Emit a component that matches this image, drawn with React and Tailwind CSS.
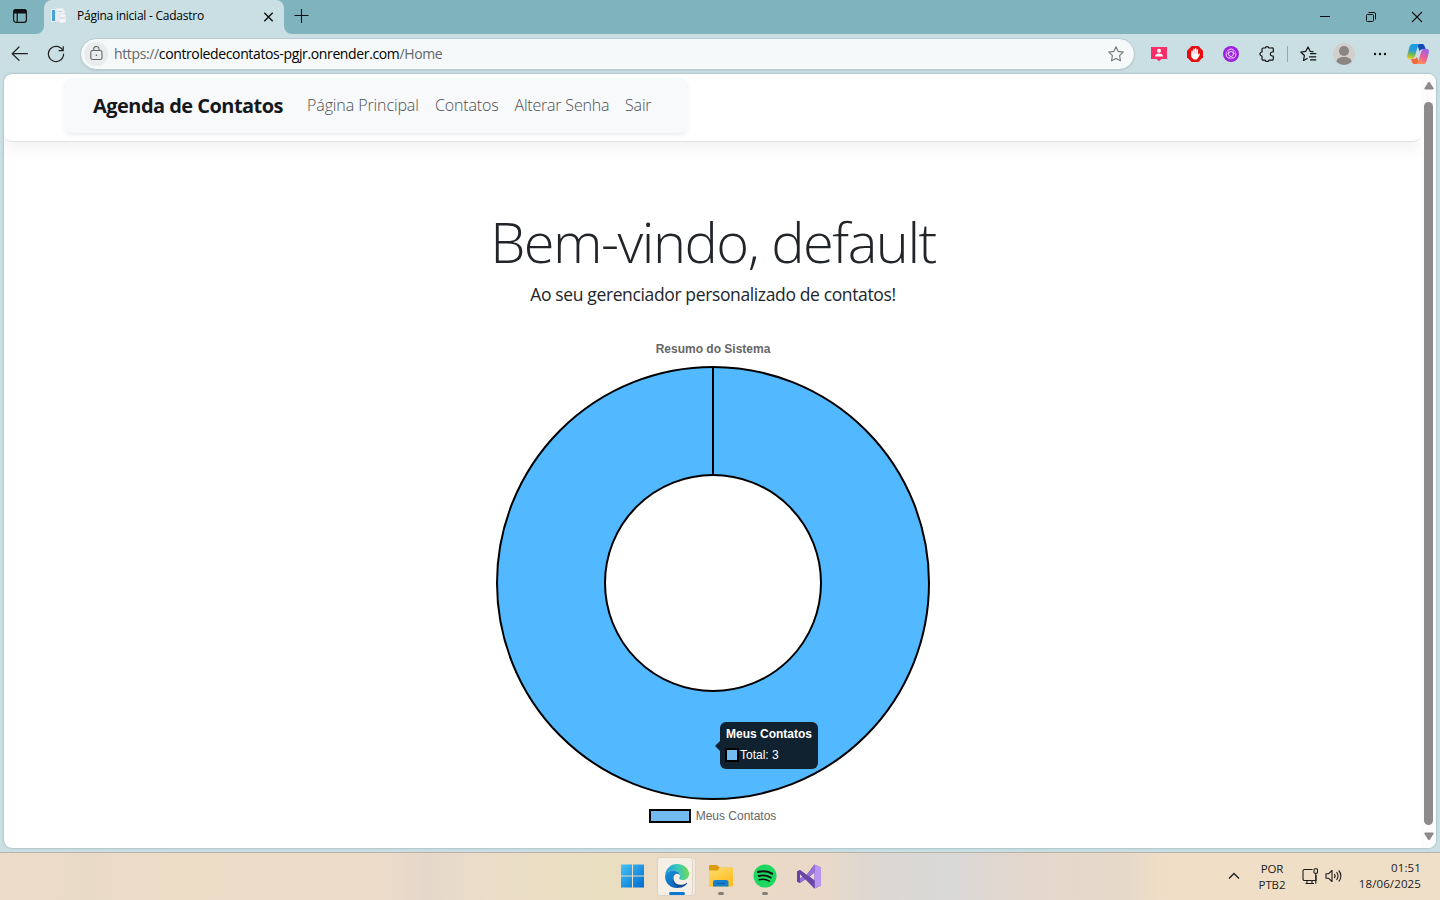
const ui = "font-['Open_Sans','Noto_Sans',sans-serif]";

function TabStrip() {
  return (
    <div className="flex h-[34px] bg-[#7fb4be] pl-[12px]">
      <svg className="mt-[8px] h-4 w-4 shrink-0" viewBox="0 0 16 16" fill="none" stroke="#111" strokeWidth="1.2">
        <rect x="1.6" y="1.6" width="12.8" height="12.8" rx="2.6" />
        <path d="M1.6 5V4a2.4 2.4 0 0 1 2.4-2.4h8A2.4 2.4 0 0 1 14.4 4v1z" fill="#111" />
        <path d="M5.2 5v9.4" />
      </svg>
      <div className="flex w-[272px] shrink-0 pl-[8px]">
        <svg className="h-[34px] w-2 shrink-0" viewBox="0 0 8 34"><path d="M8 26v8H0a8 8 0 0 0 8-8z" fill="#c9dfe3" /></svg>
        <div className="flex h-[34px] w-[240px] shrink-0 items-center rounded-t-[8px] bg-[#c9dfe3] pr-[8px] pl-[7px]">
          <svg className="mb-[2px] h-4 w-4 shrink-0" viewBox="0 0 16 16">
            <path d="M0 1h5v13H0z" fill="#e8f0f6" /><path d="M1 2h3v11H1z" fill="#4aa0d8" />
            <path d="M5 0h7l2 3v11H5z" fill="#eef3f6" stroke="#d6dde3" strokeWidth=".6" />
            <path d="M8 6h7v9H8z" fill="#f5f5f8" stroke="#cfd6dd" strokeWidth=".6" />
            <path d="M9 10h5M6.500 3.500h5" stroke="#b9c2cc" strokeWidth=".8" />
          </svg>
          <span className="mb-[2px] ml-[10px] w-[184px] shrink-0 whitespace-nowrap text-[12px] tracking-[-0.24px] text-black">Página inicial - Cadastro</span>
          <svg className="mb-[1px] h-4 w-4 shrink-0" viewBox="0 0 16 16"><path d="M3.300 3.800l8.400 8.400M11.700 3.800l-8.400 8.400" stroke="#111" strokeWidth="1.400" /></svg>
        </div>
        <svg className="h-[34px] w-2 shrink-0" viewBox="0 0 8 34"><path d="M0 26v8h8a8 8 0 0 1-8-8z" fill="#c9dfe3" /></svg>
      </div>
      <svg className="mt-[8px] ml-[-6px] h-4 w-4 shrink-0" viewBox="0 0 16 16"><path d="M7.500 1v14M.5 7.500h14" stroke="#111" strokeWidth="1.100" /></svg>
      <div className="flex-1" />
      <div className="flex w-[138px] shrink-0 items-center">
        <svg className="h-[34px] w-[46px]" viewBox="0 0 46 34"><path d="M18 16.500h10" stroke="#111" /></svg>
        <svg className="h-[34px] w-[46px]" viewBox="0 0 46 34" fill="none" stroke="#111"><rect x="18.500" y="14.500" width="7" height="7" rx="1" /><path d="M20.500 12.500h5.500a1.500 1.500 0 0 1 1.500 1.500v5.500" /></svg>
        <svg className="h-[34px] w-[46px]" viewBox="0 0 46 34"><path d="M18 12l10 10M28 12l-10 10" stroke="#111" strokeWidth="1.100" /></svg>
      </div>
    </div>
  );
}

function Star({ className }) {
  return (
    <svg className={className} viewBox="0 0 16 16" fill="none" stroke="#777" strokeWidth="1.100" strokeLinejoin="round">
      <path d="M8 .8l2.200 4.600 5 .7-3.600 3.500.9 5.200L8 12.400l-4.500 2.400.9-5.200L.8 6.100l5-.7z" />
    </svg>
  );
}

function Toolbar() {
  return (
    <div className="flex h-[40px] items-center bg-[#c9dfe3] pl-[11px]">
      <svg className="h-4 w-[17px] shrink-0" viewBox="0 0 17 16" fill="none" stroke="#222" strokeWidth="1.200" strokeLinecap="round"><path d="M16.400 7.700H1.200M8 1L1.200 7.700 8 14.300" /></svg>
      <svg className="ml-[19px] h-[18px] w-[18px] shrink-0" viewBox="0 0 18 18" fill="none" stroke="#222" strokeWidth="1.200" strokeLinecap="round"><path d="M15.800 5.500A7.600 7.600 0 1 0 16.600 9M16.200 1.500v4.200H12" /></svg>
      <div className="ml-[15px] flex h-[32px] w-[1055px] shrink-0 items-center rounded-full border border-[#b9cbd0] bg-[#f5f9fa] pr-[10px] pl-[3px] shadow-[0_1px_1px_rgba(80,110,120,0.15)]">
        <div className="flex h-6 w-6 items-center justify-center rounded-full bg-[#e8ecec]">
          <svg className="mb-[2px] h-[15px] w-[13px]" viewBox="0 0 13 15" fill="none" stroke="#666" strokeWidth="1.100"><rect x=".8" y="4.500" width="11.200" height="9" rx="1.800" /><path d="M3.700 4.500V3.200a2.700 2.700 0 0 1 5.400 0v1.300" /><circle cx="6.400" cy="9.200" r=".8" fill="#555" stroke="none" /></svg>
        </div>
        <span className="mb-[1px] ml-[6px] flex-1 whitespace-nowrap text-[14px] tracking-[-0.37px] text-[#666]">https://<span className="text-black">controledecontatos-pgjr.onrender.com</span>/Home</span>
        <Star className="h-4 w-4" />
      </div>
      <div className="ml-[16px] flex h-8 w-[289px] shrink-0 items-center">
        <svg className="h-4 w-4 shrink-0" viewBox="0 0 16 16"><path d="M0 1h16v12h-5.500L8 15.300 5.500 13H0z" fill="#fb2d66" /><circle cx="8" cy="4.700" r="2" fill="#fff" /><path d="M4 10.500c0-2 1.600-3 4-3s4 1 4 3z" fill="#fff" /></svg>
        <svg className="ml-[20px] h-4 w-4 shrink-0" viewBox="0 0 16 16"><path d="M4.700 0h6.600L16 4.700v6.600L11.300 16H4.700L0 11.300V4.700z" fill="#e60c10" /><path d="M5.100 5.200v4.600M6.900 3.400v5M8.600 2.700v5.500M10.300 3.800v5" stroke="#fff" strokeWidth="1.500" strokeLinecap="round" /><path d="M4.400 7.500h6.700v1.200l1.200-1.500.8.700-2.200 4.300-1.400 1.400H6.800L4.400 11.200z" fill="#fff" /></svg>
        <svg className="ml-[20px] h-4 w-4 shrink-0" viewBox="0 0 16 16"><circle cx="8" cy="8" r="8" fill="#9b20dc" /><g fill="none" stroke="#e9c8fb" strokeWidth=".7"><rect x="5.600" y="2.900" width="4.800" height="7.500" rx="2.400" /><rect x="5.600" y="2.900" width="4.800" height="7.500" rx="2.400" transform="rotate(120 8 8)" /><rect x="5.600" y="2.900" width="4.800" height="7.500" rx="2.400" transform="rotate(240 8 8)" /><circle cx="8" cy="8" r="4.900" /></g></svg>
        <svg className="ml-[20px] h-4 w-4 shrink-0" viewBox="0 0 16 16" fill="none" stroke="#111" strokeWidth="1.200" strokeLinejoin="round"><path d="M3 3.200A1.200 1.200 0 0 1 4.200 2h2a2 2 0 0 1 3.800 0h2.600A1.200 1.200 0 0 1 14.300 3.200V6h-1a2 2 0 0 0 0 4h1v3a1.200 1.200 0 0 1-1.200 1.200H10a2 2 0 0 1-3.800 0h-2A1.200 1.200 0 0 1 3 13v-3a2 2 0 0 1 0-4z" /></svg>
        <div className="ml-[12px] h-4 w-px bg-[#92a9ae]" />
        <svg className="ml-[12px] h-4 w-[17px] shrink-0" viewBox="0 0 17 16" fill="none" stroke="#111" strokeWidth="1.200" strokeLinejoin="round" strokeLinecap="round"><path d="M13 5.700L10.200 5.300 8 1 5.800 5.300.8 6l3.600 3.500-.9 5L7.200 12.500M10.500 7.700h5.300M9.500 10.800h6.300M10.500 13.900h5.300" /></svg>
        <svg className="ml-[16px] h-[22px] w-[22px] shrink-0" viewBox="0 0 22 22"><circle cx="11" cy="11" r="11" fill="#d2cfcc" /><circle cx="11" cy="8" r="5" fill="#8b8681" /><path d="M3.500 19c0-3.500 3-5 7.500-5s7.500 1.500 7.500 5a11 11 0 0 1-15 0z" fill="#8b8681" /></svg>
        <svg className="ml-[17px] h-4 w-4 shrink-0" viewBox="0 0 16 16" fill="#111"><circle cx="3" cy="8" r="1.200" /><circle cx="8" cy="8" r="1.200" /><circle cx="13" cy="8" r="1.200" /></svg>
        <Copilot />
      </div>
    </div>
  );
}

function Copilot() {
  return (
    <svg className="ml-[18px] h-[22px] w-[24px] shrink-0" viewBox="0 0 24 22">
      <defs>
        <linearGradient id="cpA" x1=".5" y1="0" x2=".3" y2="1"><stop offset="0" stopColor="#159bea" /><stop offset=".45" stopColor="#2f9ed0" /><stop offset=".7" stopColor="#76b955" /><stop offset="1" stopColor="#f5ca1c" /></linearGradient>
        <linearGradient id="cpB" x1=".7" y1="0" x2=".3" y2="1"><stop offset="0" stopColor="#9a65ee" /><stop offset=".5" stopColor="#e75d9d" /><stop offset="1" stopColor="#ff9350" /></linearGradient>
      </defs>
      <path d="M11 1h5c2 0 2.300 1.300 2.900 3l.8 2.300h-3.200c-1.600 0-2.300.8-2.800 2.300z" fill="#1848b8" />
      <path d="M6.500 1H14c-1.500.5-2 1.500-2.500 3.200L9.300 12c-.8 2.600-1.800 4-4.300 4H3.300C.8 16 .7 13.800 1.400 11.300L3.300 4.600C4 2.200 4.800 1 6.500 1z" fill="url(#cpA)" />
      <path d="M17.500 21H10c1.500-.5 2-1.500 2.500-3.200L14.700 10c.8-2.600 1.800-4 4.300-4h1.700c2.500 0 2.600 2.200 1.900 4.700l-1.900 6.700C20 19.800 19.200 21 17.500 21z" fill="url(#cpB)" />
      <path d="M5 16h3c1.500 0 2.200-.7 2.700-2l2 4c-.5 2-1.200 3-3.200 3H8.300c-1.400 0-2-1-2.500-2.500z" fill="#f36a36" />
    </svg>
  );
}

function Chart() {
  return (
    <div className="relative mt-[26px] flex w-[434px] flex-col items-center font-['Liberation_Sans',Arial,sans-serif]">
      <div className="h-[31px] text-[12px] leading-[28px] font-bold text-[#666]">Resumo do Sistema</div>
      <svg className="h-[434px] w-[434px]" viewBox="0 0 434 434">
        <path fillRule="evenodd" d="M217 1a216 216 0 1 1 0 432a216 216 0 1 1 0-432zM217 109a108 108 0 1 0 0 216a108 108 0 1 0 0-216z" fill="#52b8ff" stroke="#000" strokeWidth="2" />
        <path d="M217 1v108" stroke="#000" strokeWidth="2" />
      </svg>
      <div className="mt-[9px] flex h-[14px] items-center gap-[5px] pr-px">
        <div className="h-[14px] w-[42px] border-2 border-black bg-[#73bcf0]" />
        <span className="text-[12px] leading-[14px] text-[#666]">Meus Contatos</span>
      </div>
      <div className="absolute top-[387px] left-[219px] flex items-center">
        <svg className="h-[10px] w-[5px]" viewBox="0 0 5 10"><path d="M5 0v10L0 5z" fill="#10222f" /></svg>
        <div className="h-[47px] w-[98px] rounded-[6px] bg-[#10222f] px-[6px] pt-[5px] text-[12px] text-white">
          <div className="leading-[14px] font-bold whitespace-nowrap">Meus Contatos</div>
          <div className="mt-[7px] ml-[-1px] flex items-center gap-px">
            <div className="h-[14px] w-[14px] border-2 border-black bg-[#73bcf0]" />
            <span className="leading-[14px]">Total: 3</span>
          </div>
        </div>
      </div>
    </div>
  );
}

function Page() {
  return (
    <div className="mx-[4px] flex h-[774px] overflow-hidden rounded-[8px] bg-white shadow-[0_0_2px_rgba(50,90,100,0.5)]">
      <div className="flex w-[1417px] flex-col">
        <header className="h-[68px] rounded-[8px] border-b border-[#dee2e6] pt-[4px] pl-[61px] shadow-[0_8px_16px_rgba(0,0,0,0.05)]">
          <nav className="flex h-[55px] w-[622px] items-center rounded-[6px] bg-[#f8f9fa] pl-[28px] shadow-[0_2px_4px_rgba(0,0,0,0.075)]">
            <span className="w-[214px] text-[20px] font-bold tracking-[-0.54px] whitespace-nowrap text-[#16191c]">Agenda de Contatos</span>
            <div className="mb-px flex text-[16px] font-light tracking-[-0.15px] whitespace-nowrap text-[#4c5054]">
              <span className="w-[128px] tracking-[-0.1px]">Página Principal</span>
              <span className="w-[79.500px]">Contatos</span>
              <span className="w-[110.500px] tracking-[-0.2px]">Alterar Senha</span>
              <span>Sair</span>
            </div>
          </nav>
        </header>
        <main className="flex flex-col items-center pt-[66px] pl-px">
          <h1 className="h-[67px] text-[56px] leading-[67px] font-light tracking-[-1.500px] whitespace-nowrap text-[#212529]">Bem-vindo, default</h1>
          <p className="mt-[6px] h-[28px] text-[17.500px] leading-[27px] tracking-[-0.37px] whitespace-nowrap text-[#212529]">Ao seu gerenciador personalizado de contatos!</p>
          <Chart />
        </main>
      </div>
      <div className="flex w-[15px] flex-col items-center bg-[#fcfcfc] pt-[8px]">
        <svg className="h-[8px] w-[10px] shrink-0" viewBox="0 0 10 8"><path d="M4 .6a1.200 1.200 0 0 1 2 0L9.800 6.500 9 7.500H1L.2 6.500z" fill="#8b8b8b" /></svg>
        <div className="mt-[12px] h-[723px] w-[9px] rounded-full bg-[#8b8b8b]" />
        <svg className="mt-[7px] h-[8px] w-[10px] shrink-0" viewBox="0 0 10 8"><path d="M4 7.400a1.200 1.200 0 0 0 2 0L9.800 1.500 9 .5H1L.2 1.500z" fill="#8b8b8b" /></svg>
      </div>
    </div>
  );
}

function Taskbar() {
  return (
    <div className="flex h-[48px] border-t border-[#b9b3aa] bg-[linear-gradient(90deg,#eddcc7_0%,#e9dac8_6%,#eddcc6_12%,#eddcc8_26%,#e5d8cb_29.500%,#ebddc7_34%,#eadfc1_42%,#eadac6_47%,#ead9c8_57%,#dcd8d3_61%,#d9d9d8_66%,#e4d8cd_71%,#e6d9ca_78%,#f0dfc6_81%,#f0dfc8_100%)]">
      <div className="flex w-[835px] justify-end pt-[4px]">
        <div className="flex h-[43px]">
          <svg className="mt-[7px] mr-[13px] h-6 w-[25px]" viewBox="0 0 25 24">
            <defs><linearGradient id="win" x1="0" y1="0" x2="1" y2="1"><stop stopColor="#45c4f5" /><stop offset="1" stopColor="#0069d1" /></linearGradient></defs>
            <path d="M1 .5h11v11H1zM13 .5h11v11H13zM1 12.500h11v11H1zM13 12.500h11v11H13z" fill="url(#win)" />
          </svg>
          <div className="mr-[12px] ml-[-1px] flex h-[39px] w-[39px] rounded-[4px] border border-[#ded3c4] bg-[#f2ebe1]">
            <div className="flex h-[37px] w-[35px] flex-col items-center rounded-[4px] border-r border-[#ddd2c4] bg-[#f5efe6] pt-[6px] pl-[3px]">
              <svg className="h-6 w-6 shrink-0" viewBox="0 0 24 24">
                <defs>
                  <linearGradient id="eA" x1="0" y1=".5" x2="1" y2=".4"><stop stopColor="#199fdb" /><stop offset=".55" stopColor="#37c7bd" /><stop offset="1" stopColor="#73dc4f" /></linearGradient>
                  <linearGradient id="eB" x1="0" y1="0" x2=".7" y2="1"><stop stopColor="#1795dc" /><stop offset="1" stopColor="#0c61b9" /></linearGradient>
                </defs>
                <path d="M.2 11C.8 4.800 5.700 0 12 0c7 0 12 4.800 12 10 0 3.700-2.600 6-6 6-2.400 0-3.900-.9-3.900-1.700 0-.6.800-1 .8-2.600C14.900 8.500 11.500 6.500 8.300 6.500 4 6.500 1.400 8.600.2 11z" fill="url(#eA)" />
                <path d="M.1 12C.3 8.800 4 6.400 8 6.400c4 0 6.800 2.400 6.900 5.200-.4-1.200-1.600-1.900-2.900-1.900-2.100 0-4.100 2.400-4.100 5.600 0 4 2.900 7 6.300 8.400C7 25.200-.4 20 .1 12z" fill="url(#eB)" />
                <path d="M9.400 11c-2.600 4.500.5 9.800 6.100 9.800 2.900 0 4.900-1.100 6-1.900.5-.3.900.1.600.6-1.700 2.500-4.600 4.200-7.900 4.200C9.600 22.200 7 18.700 7.900 14.500c.3-1.500.8-2.700 1.500-3.500z" fill="#124c96" />
              </svg>
              <div className="mt-[4px] h-[3px] w-4 shrink-0 rounded-full bg-[#0878d4]" />
            </div>
          </div>
          <div className="flex w-[26px] flex-col items-center">
            <svg className="mt-[7px] h-6 w-[26px] shrink-0" viewBox="0 0 26 24">
              <defs><linearGradient id="fold" x1="0" y1="0" x2=".6" y2="1"><stop stopColor="#ffdd72" /><stop offset="1" stopColor="#fdbd20" /></linearGradient></defs>
              <path d="M1 2.500C1 1.500 1.600 1 2.500 1h6.300l3 2.800H23.500c1 0 1.500.5 1.500 1.500V8H1z" fill="#dc9b0a" />
              <path d="M1 6.500h8.500l2.500-3h11.500C24.500 3.500 25 4 25 5v16c0 1-.5 1.500-1.500 1.500h-21C1.500 22.500 1 22 1 21z" fill="url(#fold)" />
              <path d="M5 18.500c0-1.600.8-2.400 2.400-2.400h10.700c1.600 0 2.400.8 2.400 2.400v4H5z" fill="#1580cf" /><path d="M8.500 19.500h8.500" stroke="#0c5b9c" />
            </svg>
            <div className="mt-[4px] h-[3px] w-[6px] rounded-full bg-[#858078]" />
          </div>
          <div className="ml-[19px] flex w-6 flex-col items-center">
            <svg className="mt-[7px] h-6 w-6 shrink-0" viewBox="0 0 24 24"><circle cx="12" cy="12" r="11.500" fill="#1ed760" /><path d="M5.200 7.900c4.800-1.200 9.800-.6 13.900 1.700" stroke="#111" strokeWidth="2.200" strokeLinecap="round" fill="none" /><path d="M5.800 12c4.200-1.100 8.300-.6 11.900 1.500" stroke="#111" strokeWidth="1.900" strokeLinecap="round" fill="none" /><path d="M6.300 15.800c3.700-.9 7-.5 10.100 1.300" stroke="#111" strokeWidth="1.500" strokeLinecap="round" fill="none" /></svg>
            <div className="mt-[4px] h-[3px] w-[6px] rounded-full bg-[#858078]" />
          </div>
          <svg className="mt-[7px] mr-[13px] ml-[19px] h-[25px] w-[26px]" viewBox="0 0 26 25">
            <path d="M1 7.500L4 6l6.500 5L18.500.5 25 3.500v18L18.500 24.500 10.500 14.500 4 19 1 17.500z M18.500 8.500L13.500 12.500l5 4z M4 10v5l2.500-2.500z" fillRule="evenodd" fill="#6d49ae" />
            <path d="M18.500.5L25 3.500v18l-6.500 3z" fill="#b994f2" />
            <path d="M18.500.5v8L4 19l-3-1.500v-2.200L10.500 11z" fill="#9871d6" />
            <path d="M1 7.500L4 6l14.500 10.500v8L4 10v9l-3-1.500z" fill="#6846a8" />
          </svg>
        </div>
      </div>
      <div className="flex-1" />
      <div className="flex w-[213px] shrink-0 text-[11.500px] leading-[16px] text-[#1c1c1c]">
        <svg className="mt-[18px] h-[10px] w-[14px]" viewBox="0 0 14 10"><path d="M2 7.500l5-5 5 5" fill="none" stroke="#1c1c1c" strokeWidth="1.300" /></svg>
        <div className="mt-[8px] ml-[16px] w-[30px] text-center tracking-[-0.1px]">POR<br />PTB2</div>
        <svg className="mt-[15px] ml-[14px] h-[17px] w-[17px]" viewBox="0 0 17 17" fill="none" stroke="#1c1c1c" strokeWidth="1.100"><path d="M11.500 1.500h-8a1.500 1.500 0 0 0-1.500 1.500v8a1.500 1.500 0 0 0 1.500 1.500h11.500V7M6 12.500v3M11 12.500v3M4.500 15.500h8.500" /><rect x="13" y=".7" width="3.500" height="4.500" rx="1" /><path d="M14.800 5.200v10.500" /></svg>
        <svg className="mt-[15px] ml-[7px] h-4 w-[18px]" viewBox="0 0 18 16" fill="none" stroke="#1c1c1c" strokeWidth="1.100" strokeLinejoin="round"><path d="M1 5.800h2.500L7 2.500v11L3.500 10.200H1zM9.300 6a3 3 0 0 1 0 4M11.500 4.200a5.500 5.500 0 0 1 0 7.600M13.700 2.500a8 8 0 0 1 0 11" /></svg>
        <div className="mt-[7px] flex-1 pr-[19px] text-right tracking-[0.12px]">01:51<br />18/06/2025</div>
      </div>
    </div>
  );
}

export default function App() {
  return (
    <div className={`${ui} h-[900px] w-[1440px] overflow-hidden bg-[#c9dfe3]`}>
      <TabStrip />
      <Toolbar />
      <Page />
      <div className="h-[4px]" />
      <Taskbar />
    </div>
  );
}
